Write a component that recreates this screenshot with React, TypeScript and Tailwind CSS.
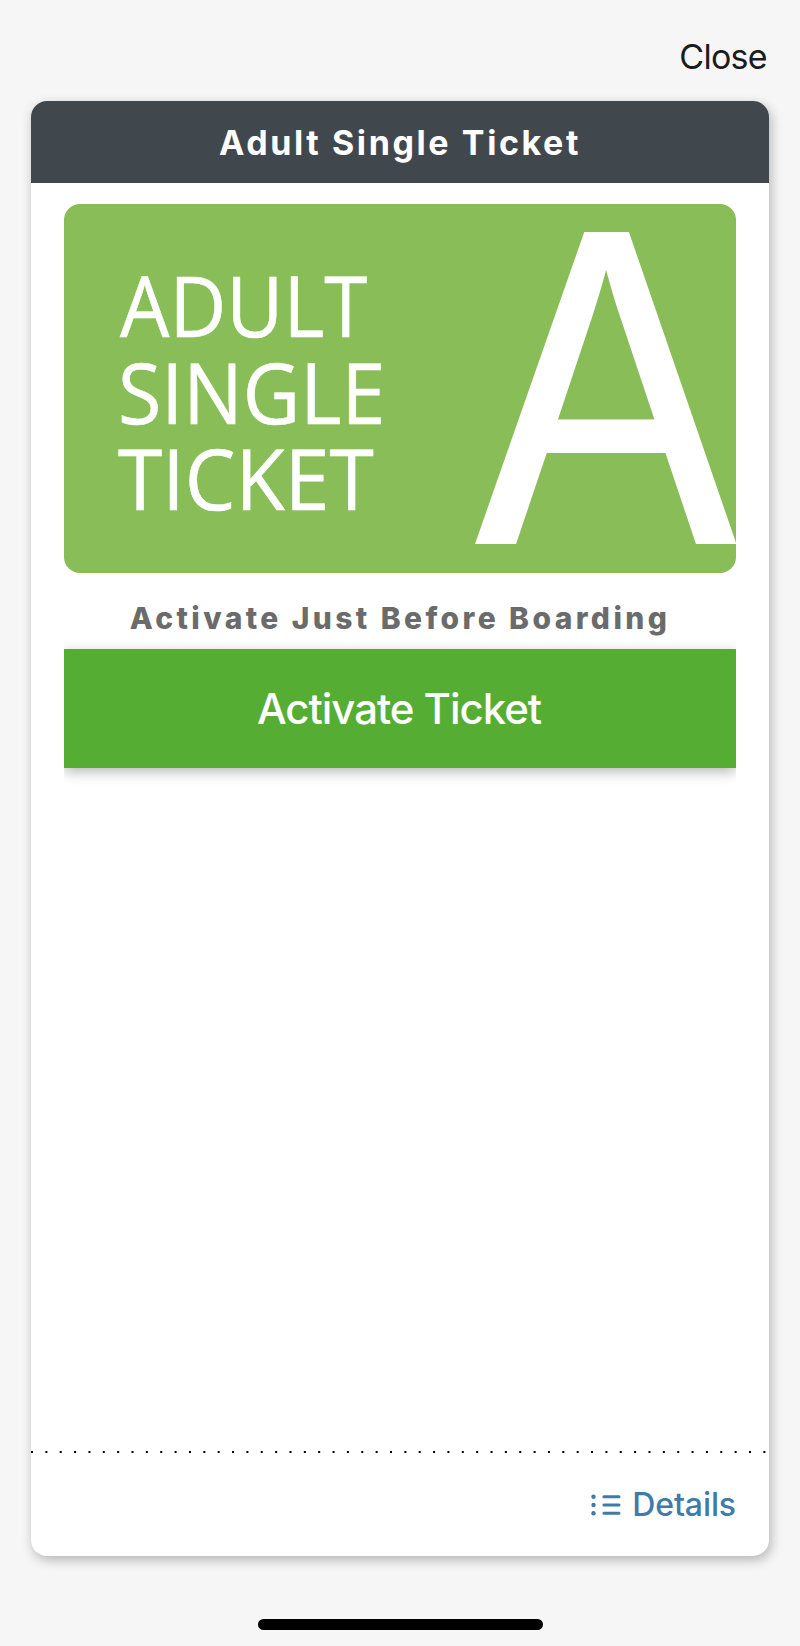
function DetailsIcon() {
  return (
    <svg className="h-[22px] w-[30px] shrink-0" viewBox="0 0 30 22" fill="none" aria-hidden="true">
      <g fill="#3f7ba6">
        <circle cx="2.5" cy="2.7" r="2.2" />
        <circle cx="2.5" cy="11" r="2.2" />
        <circle cx="2.5" cy="19.3" r="2.2" />
      </g>
      <path d="M12.9 2.7H28M12.9 11H28M12.9 19.3H28" stroke="#3f7ba6" strokeWidth="3" strokeLinecap="round" />
    </svg>
  );
}

function TicketBanner() {
  return (
    <div className="flex h-[369px] justify-between overflow-hidden rounded-2xl bg-[#88bd57] font-['Open_Sans',sans-serif] text-white">
      <div className="flex flex-col pt-[58px] pl-[54px] text-[84px] leading-[86.5px] whitespace-nowrap [-webkit-text-stroke:0.6px_white]">
        <span className="ml-[2px] origin-left scale-x-[0.932]">ADULT</span>
        <span className="origin-left scale-x-[0.94]">SINGLE</span>
        <span className="origin-left scale-x-[0.958]">TICKET</span>
      </div>
      <span className="mr-px origin-right scale-x-[0.858] font-['Liberation_Sans',sans-serif] text-[453.5px] leading-[366px] [text-shadow:2px_0_0_white,-2px_0_0_white]">
        A
      </span>
    </div>
  );
}

export default function App() {
  return (
    <div className="flex h-[1646px] w-[800px] flex-col overflow-hidden bg-[#f6f6f6] font-['Inter',sans-serif]">
      <div className="flex h-[101px] shrink-0 items-center justify-end pt-3 pr-[33px]">
        <button className="text-[34px] leading-10 tracking-[-0.7px] text-[#1c1c1e]">Close</button>
      </div>
      <main className="ml-[31px] flex h-[1455px] w-[738px] shrink-0 flex-col overflow-hidden rounded-2xl bg-white shadow-[2px_4px_12px_rgba(0,0,0,0.27)]">
        <h1 className="flex h-[82px] shrink-0 items-center justify-center bg-[#41484d] text-[34px] font-bold tracking-[2.6px] text-white">
          Adult Single Ticket
        </h1>
        <div className="px-[33px] pt-[21px]">
          <TicketBanner />
          <p className="mt-[23px] text-center text-[30px] leading-[44px] font-extrabold tracking-[3.4px] whitespace-nowrap text-[#6b6b6b]">
            Activate Just Before Boarding
          </p>
          <div className="-mt-[7px] overflow-hidden pt-4 pb-6">
            <button className="block h-[119px] w-full bg-[#56ad33] pr-[2px] text-[42px] font-medium tracking-[-1.05px] text-white shadow-[0_4px_12px_rgba(0,0,0,0.28)]">
              Activate Ticket
            </button>
          </div>
        </div>
        <svg className="mt-auto h-[2px] w-full shrink-0" aria-hidden="true">
          <line x1="0" y1="1" x2="738" y2="1" stroke="#000" strokeWidth="2" strokeDasharray="2 12.36" />
        </svg>
        <div className="flex h-[103px] shrink-0 items-center justify-end gap-[11px] pr-[33px] text-[#3f7ba6]">
          <DetailsIcon />
          <span className="text-[32px] font-medium tracking-[-0.1px]">Details</span>
        </div>
      </main>
      <div className="mx-auto mt-[63px] h-[11px] w-[285px] shrink-0 rounded-full bg-black" />
    </div>
  );
}
